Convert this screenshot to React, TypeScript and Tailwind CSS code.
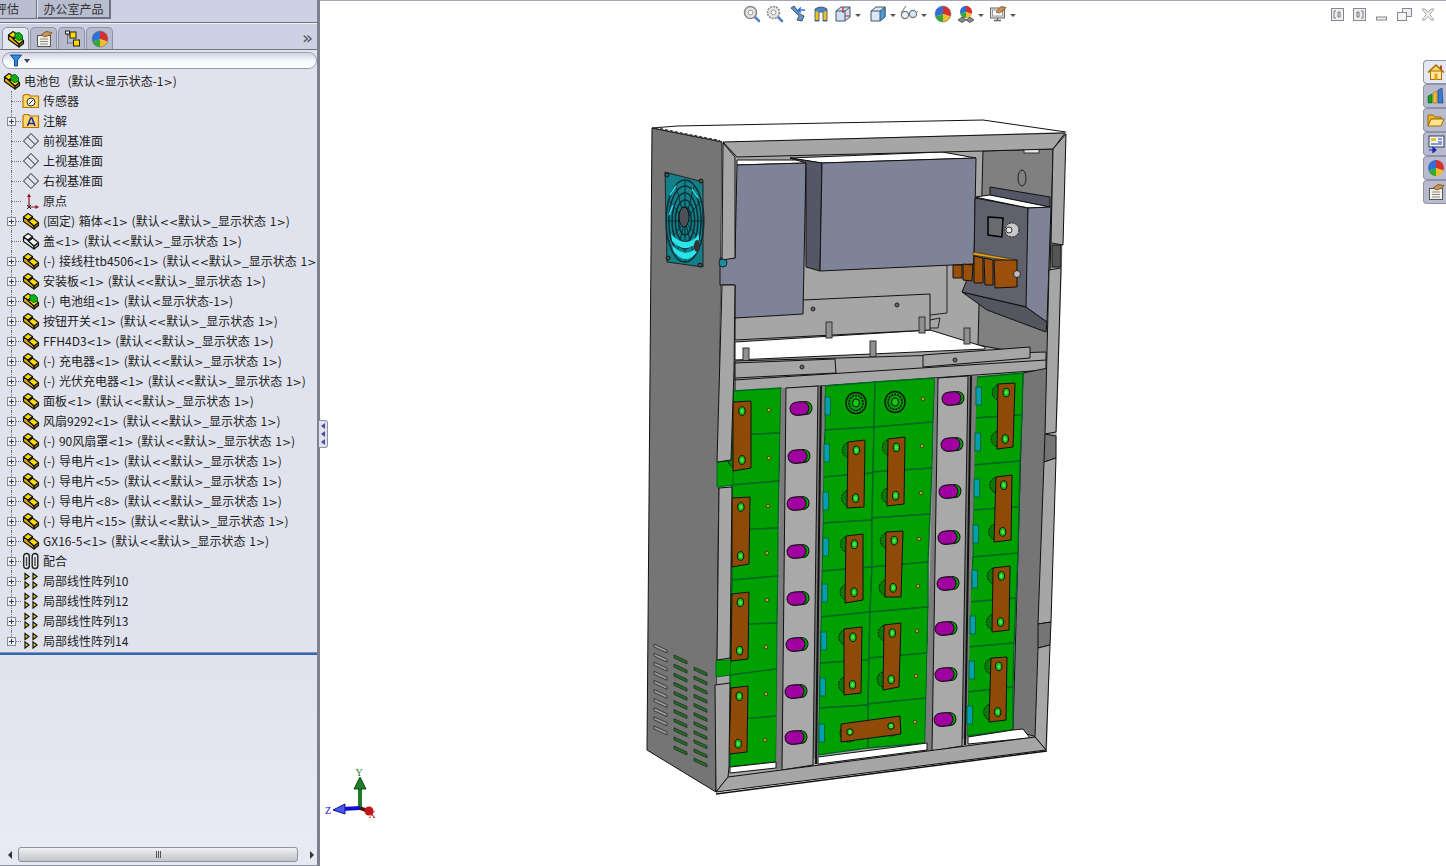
import type { ReactNode } from 'react';

type Pt = [number, number];

const poly = (p: Pt[]) => p.map((q) => q.join(',')).join(' ');

function PartIcon({ green, white }: { green?: boolean; white?: boolean }) {
  const top = white ? '#f4f5f8' : '#ffdc00';
  const front = white ? '#dcdde2' : '#dca600';
  const side = white ? '#b4b5ba' : '#a87a00';
  return (
    <svg width="18" height="18" viewBox="0 0 18 18" className="shrink-0">
      <g stroke="#151515" strokeWidth="1.15" strokeLinejoin="round">
        <path d="M1.5 5 L6 8 L6.5 9 L12 14 L12 17 L1.5 9.5 Z" fill={front} />
        <path d="M12 14 L16.5 10.5 L16.5 13.5 L12 17 Z" fill={side} />
        <path d="M6.5 9 L10.5 6 L16.5 10.5 L12 14 Z" fill={top} />
        <path d="M6 8 L10.5 4.5 L10.5 6 L6.5 9 Z" fill={side} />
        <path d="M1.5 5 L6 1.5 L10.5 4.5 L6 8 Z" fill={top} />
      </g>
      {green && <path d="M8 3.5 L12.5 2.5 L15.5 5.5 L15.5 9.5 L11 10.5 L8 7.5 Z" fill="#10b010" stroke="#063" strokeWidth="1" />}
    </svg>
  );
}

function PlaneIcon() {
  return (
    <svg width="18" height="18" viewBox="0 0 18 18" className="shrink-0">
      <path d="M9 1.5 L16.5 9 L9 16.5 L1.5 9 Z" fill="none" stroke="#222" strokeWidth="1" />
      <path d="M5.5 5 L13 12.5" stroke="#222" strokeWidth="1" />
    </svg>
  );
}

function FolderBase({ children }: { children: ReactNode }) {
  return (
    <svg width="18" height="16" viewBox="0 0 18 16" className="shrink-0">
      <path d="M1 3 L1 14.5 L16.5 14.5 L16.5 3 L8 3 L6.5 1.5 L2.5 1.5 Z" fill="#ffd964" stroke="#b87400" strokeWidth="1.2" />
      {children}
    </svg>
  );
}

function SensorIcon() {
  return (
    <FolderBase>
      <circle cx="9" cy="9" r="4" fill="#f2f2f2" stroke="#333" />
      <path d="M7 11 L11 7" stroke="#333" />
    </FolderBase>
  );
}

function NoteIcon() {
  return (
    <FolderBase>
      <path d="M5.5 13 L8.7 5 L10 5 L13 13 M7 10.5 L11.5 10.5" fill="none" stroke="#1a2aa8" strokeWidth="1.6" />
    </FolderBase>
  );
}

function OriginIcon() {
  return (
    <svg width="18" height="18" viewBox="0 0 18 18" className="shrink-0">
      <path d="M7 15 L7 4 M7 15 L15 15" stroke="#8c1414" strokeWidth="1.2" />
      <path d="M7 1.5 L5 5 L9 5 Z M17 15 L13.5 13 L13.5 17 Z" fill="#8c1414" />
      <path d="M5 13 L9 17 M9 13 L5 17" stroke="#222" />
    </svg>
  );
}

function MateIcon() {
  return (
    <svg width="18" height="18" viewBox="0 0 18 18" className="shrink-0">
      {[4.5, 13].map((x) => (
        <g key={x}>
          <rect x={x - 2.8} y="1.5" width="5.6" height="15" rx="2.8" fill="#e8eaf0" stroke="#222" strokeWidth="1.4" />
          <path d={`M${x} 5 L${x} 14`} stroke="#444" strokeWidth="1.4" />
        </g>
      ))}
    </svg>
  );
}

function PatternIcon() {
  return (
    <svg width="18" height="18" viewBox="0 0 18 18" className="shrink-0">
      {[
        [3, 1.5],
        [11, 1.5],
        [3, 10],
        [11, 10],
      ].map(([x, y]) => (
        <g key={`${x}-${y}`}>
          <path d={`M${x} ${y} L${x} ${y + 6} L${x + 4} ${y + 3} Z`} fill="#ffd800" stroke="#111" strokeWidth="1.2" />
        </g>
      ))}
    </svg>
  );
}

function Ball({ size = 18 }: { size?: number }) {
  return (
    <svg width={size} height={size} viewBox="0 0 18 18" className="shrink-0">
      <path d="M9 9 L9 1 A8 8 0 0 0 1.5 11.5 Z" fill="#2f6fd8" />
      <path d="M9 9 L9 1 A8 8 0 0 1 16.5 11.5 Z" fill="#d83030" />
      <path d="M9 9 L1.5 11.5 A8 8 0 0 0 9 17 Z" fill="#35a835" />
      <path d="M9 9 L16.5 11.5 A8 8 0 0 1 9 17 Z" fill="#e8c030" />
      <circle cx="9" cy="9" r="8" fill="none" stroke="#777" strokeWidth="0.6" />
    </svg>
  );
}

function PropIcon() {
  return (
    <svg width="18" height="18" viewBox="0 0 18 18">
      <rect x="2.5" y="5.5" width="13" height="11" fill="#f3f1e8" stroke="#555" />
      <path d="M5 9 L13 9 M5 11.5 L13 11.5 M5 14 L13 14" stroke="#888" />
      <path d="M6 5 L11 1.5 L17 2.5 L15 5 L10 7 Z" fill="#c9935a" stroke="#7a4e20" strokeWidth="0.8" />
    </svg>
  );
}

function ConfigIcon() {
  return (
    <svg width="18" height="18" viewBox="0 0 18 18">
      <path d="M4.5 1.5 L4.5 14 M4.5 5 L8 5 M4.5 13 L10 13" stroke="#333" strokeDasharray="1 1" />
      <rect x="7" y="2" width="6" height="6" fill="#ffd800" stroke="#222" />
      <rect x="10.5" y="10" width="6" height="6" fill="#ffd800" stroke="#222" />
      <rect x="2.5" y="1" width="4" height="3" fill="#f3f3f3" stroke="#222" />
    </svg>
  );
}

function Caret() {
  return <span className="ml-[3px] mt-[2px] w-0 h-0 border-x-[3px] border-x-transparent border-t-[3px] border-t-[#555]" />;
}

function ToolIcon({ children, w = 18, caret }: { children: ReactNode; w?: number; caret?: boolean }) {
  return (
    <div className="flex items-center shrink-0">
      <svg width={w} height="18" viewBox={`0 0 ${w} 18`}>
        {children}
      </svg>
      {caret && <Caret />}
    </div>
  );
}

function Zoom({ dashed }: { dashed?: boolean }) {
  return (
    <>
      <path d="M11 11 L16 16" stroke="#4d86c8" strokeWidth="2.6" strokeLinecap="round" />
      <circle cx="7.5" cy="7.5" r="6" fill="#e6e6e6" stroke="#8a8a8a" strokeWidth="1.6" strokeDasharray={dashed ? '2 1' : undefined} />
      <circle cx="7.5" cy="7.5" r="2.4" fill="#fff" stroke="#999" />
    </>
  );
}

function ViewToolbar() {
  return (
    <div className="flex items-center h-[26px] ml-[423px] text-[0px]">
      <ToolIcon>
        <Zoom />
      </ToolIcon>
      <div className="ml-[5px]">
        <ToolIcon>
          <Zoom dashed />
        </ToolIcon>
      </div>
      <div className="ml-[5px]">
        <ToolIcon>
          <path d="M2 3 L10 11 L8 15 L13 16 L15 11 L11 9 L5 1 Z" fill="#5a9ad8" stroke="#333" strokeWidth="0.8" />
          <path d="M9 5 L16 5 M9 5 L12 2.5 M9 5 L12 7.5" stroke="#2f6fd8" strokeWidth="1.4" fill="none" />
        </ToolIcon>
      </div>
      <div className="ml-[5px]">
        <ToolIcon>
          <path d="M3 4 Q9 0 15 4 L15 16 L11 16 L11 7 L7 7 L7 16 L3 16 Z" fill="#4d86c8" stroke="#345" strokeWidth="0.8" />
          <path d="M3.5 6 L6.5 7 L6.5 15 L3.5 15 Z M11.5 7 L14.5 6 L14.5 15 L11.5 15 Z" fill="#f0c020" />
        </ToolIcon>
      </div>
      <div className="ml-[4px]">
        <ToolIcon caret>
          <path d="M2 6 L7 2 L16 2 L16 12 L11 16 L2 16 Z" fill="#cfe0f4" stroke="#456" />
          <path d="M2 6 L11 6 L11 16 M11 6 L16 2" fill="none" stroke="#456" />
          <path d="M9 2 L9 8 M11 11 L16 11" stroke="#d02020" strokeWidth="1.2" />
        </ToolIcon>
      </div>
      <div className="ml-[8px]">
        <ToolIcon caret>
          <path d="M2 6 L7 2 L16 2 L16 12 L11 16 L2 16 Z" fill="#d8e8f8" stroke="#456" />
          <path d="M11 6 L16 2 L16 12 L11 16 Z" fill="#4d9ad8" stroke="#456" />
          <path d="M2 6 L11 6" stroke="#456" />
        </ToolIcon>
      </div>
      <div className="ml-[4px]">
        <ToolIcon caret>
          <path d="M6 1 L1 8" stroke="#888" strokeWidth="1.2" />
          <circle cx="5" cy="10" r="3.6" fill="#eee" stroke="#777" strokeWidth="1.2" />
          <circle cx="13" cy="9" r="3.6" fill="#d5e6f6" stroke="#777" strokeWidth="1.2" />
          <path d="M8.5 9 L9.5 9 M16 8 L18 6" stroke="#777" />
        </ToolIcon>
      </div>
      <div className="ml-[7px]">
        <Ball />
      </div>
      <div className="ml-[5px]">
        <ToolIcon caret>
          <g transform="translate(2 0) scale(0.78)">
            <path d="M9 9 L9 1 A8 8 0 0 0 1.5 11.5 Z" fill="#2f6fd8" />
            <path d="M9 9 L9 1 A8 8 0 0 1 16.5 11.5 Z" fill="#d83030" />
            <path d="M9 9 L1.5 11.5 A8 8 0 0 0 9 17 Z" fill="#35a835" />
            <path d="M9 9 L16.5 11.5 A8 8 0 0 1 9 17 Z" fill="#e8c030" />
          </g>
          <path d="M1 15 L5 12 L9 15 L13 12 L17 15 L13 17.5 L9 15 L5 17.5 Z" fill="#888" stroke="#333" strokeWidth="0.7" />
        </ToolIcon>
      </div>
      <div className="ml-[5px]">
        <ToolIcon caret>
          <rect x="1.5" y="3" width="14" height="10" fill="#e4e4e4" stroke="#666" />
          <rect x="3.5" y="5" width="10" height="6" fill="#fff" stroke="#999" />
          <path d="M5 15.5 L12 15.5 M8.5 13 L8.5 15.5" stroke="#666" strokeWidth="1.4" />
          <path d="M7 7 L12 1.5 L17 2.5 L14 6 L10 8 Z" fill="#c9935a" stroke="#7a4e20" strokeWidth="0.8" />
        </ToolIcon>
      </div>
    </div>
  );
}

function WindowControls() {
  return (
    <div className="ml-auto flex items-center h-[26px] pr-[11px] gap-[9px]">
      <svg width="13" height="13" viewBox="0 0 13 13" className="shrink-0">
        <rect x="0.5" y="0.5" width="12" height="12" fill="#eceef3" stroke="#888" />
        <path d="M5 3 L3 3 L3 10 L5 10 M7 4 L9 4 L9 9 L7 9 Z" fill="none" stroke="#777" />
      </svg>
      <svg width="13" height="13" viewBox="0 0 13 13" className="shrink-0">
        <rect x="0.5" y="0.5" width="12" height="12" fill="#eceef3" stroke="#888" />
        <path d="M4 4 L6 4 L6 9 L4 9 Z M8 3 L10 3 L10 10 L8 10" fill="none" stroke="#777" />
      </svg>
      <svg width="13" height="13" viewBox="0 0 13 13" className="shrink-0">
        <rect x="1.5" y="9" width="10" height="3" fill="#eceef3" stroke="#888" />
      </svg>
      <svg width="15" height="13" viewBox="0 0 15 13" className="shrink-0">
        <rect x="5.5" y="0.5" width="9" height="8" fill="#eceef3" stroke="#888" />
        <rect x="0.5" y="4.5" width="9" height="8" fill="#f4f5f8" stroke="#888" />
      </svg>
      <svg width="14" height="13" viewBox="0 0 14 13" className="shrink-0">
        <path d="M1 1 L4 1 L7 4.5 L10 1 L13 1 L8.7 6.5 L13 12 L10 12 L7 8.5 L4 12 L1 12 L5.3 6.5 Z" fill="#f1f2f5" stroke="#a8a8a8" />
      </svg>
    </div>
  );
}

const TASK_ICONS: ReactNode[] = [
  <>
    <path d="M1 9.5 L9 2 L17 9.5" fill="#ffd964" stroke="#a87000" strokeWidth="1.6" />
    <rect x="3.5" y="8" width="11" height="8.5" fill="#ffe9a0" stroke="#a87000" />
    <rect x="7.5" y="10.5" width="3" height="6" fill="#e8a020" />
    <rect x="13" y="2.5" width="2" height="4" fill="#b84a20" />
  </>,
  <>
    <path d="M1 9 L5 7 L5 16 L1 16 Z" fill="#18a018" stroke="#063" strokeWidth="0.6" />
    <path d="M6 6 L10 4 L10 16 L6 16 Z" fill="#f0c020" stroke="#863" strokeWidth="0.6" />
    <path d="M11 3 L15 1 L16 16 L11 16 Z" fill="#3a7ad8" stroke="#235" strokeWidth="0.6" />
  </>,
  <>
    <path d="M1 4 L6 4 L8 6 L14 6 L14 8 L4 8 L1 15 Z" fill="#f0b830" stroke="#a06a00" />
    <path d="M4 8 L17 8 L14 15 L1 15 Z" fill="#ffe590" stroke="#a06a00" />
  </>,
  <>
    <rect x="2" y="1" width="15" height="11" fill="#eef2fa" stroke="#345" />
    <rect x="4" y="3" width="5" height="3" fill="#f0c020" />
    <path d="M11 4 L15 4 M11 7 L15 7 M4 9 L15 9" stroke="#2a3aa8" />
    <path d="M2 15 L9 15 M9 15 L6 12.5 L6 17.5 Z" fill="#1a2ab8" stroke="#1a2ab8" strokeWidth="1.2" />
  </>,
  <>
    <path d="M9 9 L9 1 A8 8 0 0 0 1.5 11.5 Z" fill="#2f6fd8" />
    <path d="M9 9 L9 1 A8 8 0 0 1 16.5 11.5 Z" fill="#d83030" />
    <path d="M9 9 L1.5 11.5 A8 8 0 0 0 9 17 Z" fill="#35a835" />
    <path d="M9 9 L16.5 11.5 A8 8 0 0 1 9 17 Z" fill="#e8c030" />
  </>,
  <>
    <rect x="2.5" y="5.5" width="13" height="11" fill="#f3f1e8" stroke="#555" />
    <path d="M5 9 L13 9 M5 11.5 L13 11.5 M5 14 L13 14" stroke="#888" />
    <path d="M6 5 L11 1.5 L17 2.5 L15 5 L10 7 Z" fill="#c9935a" stroke="#7a4e20" strokeWidth="0.8" />
  </>,
];

function TaskPane() {
  return (
    <div className="absolute right-0 top-[60px] flex flex-col">
      {TASK_ICONS.map((icon, i) => (
        <div
          key={i}
          className={`w-[23px] h-[24px] flex items-center justify-end pr-[1px] rounded-l-[4px] border border-r-0 border-[#8f93a6] ${
            i === 0 ? 'bg-[#e6e8f1]' : 'bg-[#b7bbcd]'
          }`}
        >
          <svg width="18" height="18" viewBox="0 0 18 18">
            {icon}
          </svg>
        </div>
      ))}
    </div>
  );
}

// Front-plane geometry of the cabinet, traced from the reference
const CELLS: [number, number, number, number][][] = [
  [
    [733, 391, 781, 388],
    [733, 435, 780, 433],
    [732, 485, 779, 481],
    [732, 530, 778, 528],
    [732, 580, 778, 576],
    [731, 625, 777, 623],
    [730, 675, 777, 669],
    [730, 720, 777, 716],
    [730, 767, 776, 762],
  ],
  [
    [825, 386, 875, 382],
    [825, 430, 874, 427],
    [823, 477, 873, 473],
    [823, 523, 872, 520],
    [822, 571, 872, 567],
    [821, 617, 870, 612],
    [820, 663, 869, 660],
    [819, 708, 868, 705],
    [818, 755, 868, 748],
  ],
  [
    [875, 382, 935, 378],
    [874, 427, 933, 422],
    [873, 472, 932, 468],
    [872, 518, 930, 514],
    [872, 567, 928, 562],
    [870, 612, 928, 607],
    [869, 658, 927, 653],
    [868, 704, 926, 698],
    [868, 748, 925, 743],
  ],
  [
    [977, 377, 1023, 373],
    [975, 418, 1022, 415],
    [974, 465, 1020, 461],
    [973, 510, 1019, 507],
    [973, 557, 1018, 553],
    [970, 602, 1016, 598],
    [968, 647, 1014, 643],
    [968, 692, 1013, 687],
    [967, 736, 1013, 730],
  ],
];

const BARS: Pt[][] = [
  [[733, 402], [751, 401], [751, 468], [733, 471]],
  [[732, 498], [750, 497], [749, 564], [732, 567]],
  [[732, 594], [749, 592], [748, 659], [731, 661]],
  [[731, 688], [748, 686], [747, 752], [729, 754]],
  [[848, 442], [865, 440], [864, 507], [847, 508]],
  [[846, 536], [863, 534], [863, 600], [845, 603]],
  [[844, 629], [862, 627], [861, 693], [844, 695]],
  [[888, 439], [905, 437], [904, 504], [887, 506]],
  [[886, 532], [903, 531], [901, 597], [885, 597]],
  [[884, 625], [901, 623], [899, 687], [883, 690]],
  [[998, 384], [1015, 383], [1013, 447], [997, 449]],
  [[996, 477], [1012, 475], [1011, 540], [994, 542]],
  [[993, 568], [1010, 566], [1009, 630], [992, 632]],
  [[991, 658], [1007, 657], [1006, 720], [989, 722]],
];

const SLOTS: Pt[] = [
  [800, 408], [798, 456], [797, 503], [797, 551], [797, 598], [796, 644], [795, 691], [795, 737],
  [952, 398], [951, 444], [949, 491], [948, 537], [947, 583], [945, 628], [945, 674], [944, 719],
];

const TABS: Pt[] = [
  [825, 397], [824, 444], [823, 492], [823, 538], [822, 584], [821, 632], [820, 678], [819, 724],
  [976, 387], [975, 433], [974, 479], [973, 525], [972, 570], [970, 616], [969, 661], [967, 706],
];

const DOTS: Pt[] = [
  [769, 410], [769, 458], [768, 506], [767, 553], [767, 600], [766, 647], [766, 694], [765, 740],
  [923, 399], [922, 446], [921, 493], [919, 539], [918, 586], [917, 631], [916, 676], [915, 722],
];

const VENTS: { x: number; y: number; n: number; fill: string }[] = [
  { x: 654, y: 644, n: 10, fill: '#9a9a9a' },
  { x: 674, y: 655, n: 11, fill: '#1f6f1f' },
  { x: 694, y: 667, n: 11, fill: '#1f6f1f' },
];

const GRAY = '#a6a6a6';
const STEEL = '#7f8397';
const INK = { stroke: '#111', strokeWidth: 1, strokeLinejoin: 'round' as const };

function Bolt({ x, y, r = 6 }: { x: number; y: number; r?: number }) {
  return (
    <>
      <ellipse cx={x} cy={y} rx={3.2} ry={r * 0.72} fill="#16c016" stroke="#111" />
      <ellipse cx={x} cy={y} rx={1.4} ry={2} fill="#50e850" />
    </>
  );
}

function CabinetModel() {
  return (
    <svg viewBox="320 0 1126 866" className="absolute inset-0 w-full h-full">
      {/* top face */}
      <polygon points={poly([[652, 128], [677, 126], [983, 120], [1066, 132], [1053, 149], [737, 157], [722, 142]])} fill="#fff" {...INK} />
      {/* left side */}
      <polygon points={poly([[652, 128], [722, 142], [716, 792], [647, 750]])} fill="#757575" {...INK} />
      <polyline points="655,128 720,141" fill="none" stroke="#333" strokeWidth="2" strokeDasharray="3 2" />

      {/* fan */}
      <polygon points={poly([[665, 172], [703, 182], [703, 267], [667, 262]])} fill="#137f88" stroke="#222" />
      {[14, 21, 28, 35, 41].map((r) => (
        <ellipse key={r} cx={685} cy={221} rx={r * 0.46} ry={r} fill="none" stroke="#0b2f36" strokeWidth="1.5" />
      ))}
      {[0, 30, 60, 90, 120, 150].map((a) => {
        const dx = Math.cos((a * Math.PI) / 180);
        const dy = Math.sin((a * Math.PI) / 180);
        return <line key={a} x1={685 - 18 * dx} y1={221 - 40 * dy} x2={685 + 18 * dx} y2={221 + 40 * dy} stroke="#0b2f36" strokeWidth="1" />;
      })}
      <path d="M671 234 Q686 250 699 234 L699 240 Q686 256 672 241 Z" fill="#2ae4e8" />
      <path d="M672 245 Q686 260 698 246 L697 252 Q686 266 674 252 Z" fill="#2ae4e8" />
      <path d="M670 195 L676 186 M698 198 L692 189 M669 215 L673 205" stroke="#27dce0" strokeWidth="1.4" />
      <ellipse cx={684} cy={217} rx={5} ry={10} fill="#4a5258" stroke="#111" />
      <ellipse cx={697} cy={246} rx={3} ry={6} fill="#333" />
      {[[667, 175], [701, 181], [668, 258], [700, 265]].map(([x, y]) => (
        <circle key={`${x}-${y}`} cx={x} cy={y} r="2" fill="#555" stroke="#111" />
      ))}

      {/* vents */}
      {VENTS.map((v) =>
        Array.from({ length: v.n }, (_, i) => (
          <polygon
            key={`${v.x}-${i}`}
            points={poly([
              [v.x, v.y + i * 9.1],
              [v.x + 13, v.y + i * 9.1 + 6],
              [v.x + 13, v.y + i * 9.1 + 9],
              [v.x, v.y + i * 9.1 + 3],
            ])}
            fill={v.fill}
            stroke="#2a2a2a"
            strokeWidth="0.8"
          />
        ))
      )}

      {/* interior */}
      <polygon points={poly([[722, 142], [1066, 132], [1047, 750], [716, 792]])} fill={GRAY} stroke="none" />
      <polygon points={poly([[983, 151], [1053, 149], [1048, 358], [978, 345]])} fill="#808080" {...INK} />
      <ellipse cx={1022} cy={178} rx={4} ry={8} fill="none" stroke="#222" />
      <rect x={1024} y={149} width={15} height={4} fill="#e8e8e8" stroke="#333" />

      {/* white opening and plate */}
      <polygon points={poly([[735, 342], [930, 330], [985, 347], [985, 349], [735, 360]])} fill="#fff" {...INK} />
      <polygon points={poly([[803, 300], [930, 294], [930, 330], [735, 340], [735, 318]])} fill={GRAY} {...INK} />
      <polyline points="947,265 947,313 930,315" fill="none" stroke="#222" />
      <path d="M930 320 L940 318 L938 328 L930 328" fill="none" stroke="#222" />
      <circle cx={813} cy={309} r="2" fill="#666" stroke="#222" />
      <circle cx={897} cy={305} r="2" fill="#666" stroke="#222" />
      {[[829, 322], [922, 317], [967, 328], [873, 341], [746, 348]].map(([x, y]) => (
        <rect key={x} x={x - 3} y={y} width={6} height={16} fill="#8f8f8f" stroke="#333" />
      ))}

      {/* power boxes */}
      <polygon points={poly([[737, 160], [800, 160], [806, 163], [737, 165]])} fill="#fff" {...INK} />
      <polygon points={poly([[737, 165], [806, 163], [803, 314], [735, 318], [735, 285], [720, 285], [720, 258], [735, 258]])} fill={STEEL} {...INK} />
      <polygon points={poly([[790, 158], [942, 152], [976, 158], [822, 163]])} fill="#fff" {...INK} />
      <polygon points={poly([[790, 158], [822, 163], [820, 271], [806, 267], [806, 163]])} fill="#555766" {...INK} />
      <polygon points={poly([[822, 163], [976, 158], [974, 264], [820, 271]])} fill={STEEL} {...INK} />

      {/* right-hand module */}
      <polygon points={poly([[990, 187], [1050, 197], [1050, 207], [990, 195]])} fill="#555766" {...INK} />
      <polygon points={poly([[962, 292], [1026, 307], [1047, 322], [1046, 332], [987, 310]])} fill="#54565f" {...INK} />
      <polygon points={poly([[975, 197], [990, 195], [1050, 207], [1028, 208]])} fill="#fff" {...INK} />
      <polygon points={poly([[975, 198], [1028, 208], [1027, 307], [962, 292], [974, 262]])} fill="#5f616d" {...INK} />
      <polygon points={poly([[1028, 208], [1051, 207], [1047, 322], [1026, 307]])} fill={STEEL} {...INK} />
      <polygon points={poly([[988, 217], [1003, 218], [1002, 237], [988, 235]])} fill="#6a6a70" stroke="#000" strokeWidth="1.5" />
      <circle cx={1012} cy={230} r={7} fill="#c8c8c8" stroke="#222" strokeDasharray="2 1" />
      <circle cx={1009} cy={230} r={3} fill="#e8e8e8" stroke="#333" />
      <polygon points={poly([[973, 252], [1017, 260], [1017, 262], [973, 255]])} fill="#e8a010" stroke="#222" strokeWidth="0.6" />
      {([
        [[953, 265], [962, 265], [962, 278], [953, 278]],
        [[963, 264], [973, 265], [972, 281], [963, 280]],
        [[974, 256], [983, 258], [983, 283], [974, 283]],
        [[984, 258], [993, 260], [993, 285], [985, 285]],
        [[994, 260], [1017, 260], [1017, 287], [995, 288]],
      ] as Pt[][]).map((p) => (
        <polygon key={p[0][0]} points={poly(p)} fill="#9a4f0a" {...INK} />
      ))}
      <circle cx={1017} cy={274} r={3.5} fill="#bbb" stroke="#222" />

      {/* cross bars */}
      <polygon points={poly([[735, 361], [1046, 352], [1046, 370], [735, 392]])} fill={GRAY} {...INK} />
      <polygon points={poly([[735, 363], [835, 359], [836, 373], [735, 378]])} fill={GRAY} {...INK} />
      <polygon points={poly([[923, 355], [1030, 347], [1030, 358], [923, 367]])} fill={GRAY} {...INK} />
      <circle cx={802} cy={367} r="2" fill="#666" stroke="#222" />
      <circle cx={955} cy={360} r="2" fill="#666" stroke="#222" />
      <line x1="734" y1="380" x2="1046" y2="360" stroke="#111" />

      {/* back of the battery bay */}
      <polygon points={poly([[1023, 373], [1048, 368], [1037, 737], [1013, 730]])} fill="#757575" {...INK} />

      {/* battery cells */}
      {CELLS.map((col, c) =>
        col.slice(0, -1).map((l, i) => {
          const n = col[i + 1];
          return (
            <polygon
              key={`${c}-${i}`}
              points={poly([[l[0], l[1]], [l[2], l[3]], [n[2], n[3]], [n[0], n[1]]])}
              fill="#00a000"
              stroke="#062"
              strokeWidth="1.4"
            />
          );
        })
      )}
      <polygon points={poly([[717, 462], [733, 461], [733, 485], [717, 487]])} fill="#00a000" stroke="#062" />
      <polygon points={poly([[716, 660], [731, 660], [730, 675], [716, 677]])} fill="#00a000" stroke="#062" />

      {/* strips */}
      <polygon points={poly([[781, 388], [825, 386], [818, 757], [776, 770]])} fill="#7c7c7c" stroke="none" />
      <polygon points={poly([[786, 388], [818, 386], [813, 765], [782, 770]])} fill="#a9a9a9" {...INK} />
      <line x1="821" y1="386" x2="816" y2="764" stroke="#111" strokeWidth="2" />
      <polygon points={poly([[935, 378], [977, 376], [967, 738], [925, 752]])} fill="#7c7c7c" stroke="none" />
      <polygon points={poly([[938, 378], [968, 376], [962, 746], [932, 751]])} fill="#a9a9a9" {...INK} />
      <line x1="971" y1="376" x2="965" y2="745" stroke="#111" strokeWidth="2" />

      {SLOTS.map(([x, y]) => (
        <g key={`${x}-${y}`}>
          <rect x={x - 9} y={y - 6} width={21} height={13} rx={6.5} fill="#06a006" stroke="#111" transform={`rotate(-4 ${x} ${y})`} />
          <rect x={x - 10} y={y - 6} width={19} height={13} rx={6.5} fill="#a000a0" stroke="#111" transform={`rotate(-4 ${x} ${y})`} />
        </g>
      ))}
      {TABS.map(([x, y]) => (
        <rect key={`${x}-${y}`} x={x} y={y} width={5.5} height={18} fill="#00a0b0" stroke="#063" />
      ))}
      {DOTS.map(([x, y]) => (
        <circle key={`${x}-${y}`} cx={x} cy={y} r="1.8" fill="#c0a820" stroke="#333" strokeWidth="0.8" />
      ))}

      {/* terminal washers on the top row */}
      {[[856, 403], [895, 402]].map(([x, y]) => (
        <g key={x}>
          <ellipse cx={x} cy={y} rx={10} ry={10.5} fill="#00a000" stroke="#111" strokeWidth="1.4" />
          <ellipse cx={x} cy={y} rx={7} ry={7.5} fill="none" stroke="#111" strokeDasharray="2 1" strokeWidth="1.6" />
          <ellipse cx={x} cy={y} rx={3.5} ry={4} fill="#18c818" stroke="#111" />
        </g>
      ))}

      {/* copper links */}
      {BARS.map((b) => {
        const top: Pt = [(b[0][0] + b[1][0]) / 2, (b[0][1] + b[1][1]) / 2];
        const bot: Pt = [(b[2][0] + b[3][0]) / 2, (b[2][1] + b[3][1]) / 2];
        const a: Pt = [top[0] + (bot[0] - top[0]) * 0.14, top[1] + (bot[1] - top[1]) * 0.14];
        const z: Pt = [top[0] + (bot[0] - top[0]) * 0.86, top[1] + (bot[1] - top[1]) * 0.86];
        return (
          <g key={b[0].join()}>
            <circle cx={a[0] - 6} cy={a[1]} r={8} fill="#0a7a0a" stroke="#111" strokeDasharray="2 1" />
            <circle cx={z[0] - 6} cy={z[1]} r={8} fill="#0a7a0a" stroke="#111" strokeDasharray="2 1" />
            <polygon points={poly(b)} fill="#8e4a06" {...INK} />
            <Bolt x={a[0]} y={a[1]} />
            <Bolt x={z[0]} y={z[1]} />
          </g>
        );
      })}
      <circle cx={849} cy={733} r={9} fill="#0a7a0a" stroke="#111" strokeDasharray="2 1" />
      <circle cx={891} cy={727} r={9} fill="#0a7a0a" stroke="#111" strokeDasharray="2 1" />
      <polygon points={poly([[841, 724], [900, 716], [901, 734], [841, 742]])} fill="#8e4a06" {...INK} />
      <Bolt x={850} y={732} r={4.5} />
      <Bolt x={891} y={726} r={4.5} />

      {/* white ledge at the bottom */}
      <polygon points={poly([[730, 767], [776, 762], [776, 768], [730, 773]])} fill="#fff" {...INK} />
      <polygon points={poly([[818, 757], [927, 743], [927, 750], [818, 764]])} fill="#fff" {...INK} />
      <polygon points={poly([[968, 737], [1013, 730], [1023, 729], [1030, 738], [968, 744]])} fill="#fff" {...INK} />

      {/* front frame */}
      <polygon points={poly([[723, 142], [1065, 133], [1053, 149], [983, 151], [737, 157]])} fill={GRAY} {...INK} />
      <polygon points={poly([[723, 143], [735, 157], [735, 258], [722, 260]])} fill={GRAY} {...INK} />
      <polygon points={poly([[722, 285], [735, 285], [734, 370], [731, 460], [717, 462]])} fill={GRAY} {...INK} />
      <polygon points={poly([[719, 488], [732, 487], [730, 658], [717, 660]])} fill={GRAY} {...INK} />
      <polygon points={poly([[715, 685], [730, 683], [729, 767], [728, 777], [716, 792]])} fill={GRAY} {...INK} />
      <polygon points={poly([[1066, 134], [1053, 149], [1051, 243], [1063, 245]])} fill={GRAY} {...INK} />
      <rect x={1052} y={245} width={9} height={22} fill="#555" stroke="#111" />
      <polygon points={poly([[1049, 270], [1061, 268], [1058, 370], [1056, 432], [1045, 434]])} fill={GRAY} {...INK} />
      <polygon points={poly([[1045, 434], [1056, 436], [1056, 458], [1044, 462]])} fill="#757575" {...INK} />
      <polygon points={poly([[1044, 462], [1056, 458], [1051, 622], [1038, 624]])} fill={GRAY} {...INK} />
      <polygon points={poly([[1038, 624], [1051, 622], [1050, 645], [1038, 648]])} fill="#757575" {...INK} />
      <polygon points={poly([[1038, 648], [1050, 645], [1046, 750], [1035, 737]])} fill={GRAY} {...INK} />
      <polygon points={poly([[716, 792], [1046, 750], [1035, 737], [728, 777]])} fill={GRAY} {...INK} />
      <polyline points="716,794 1047,751" fill="none" stroke="#111" strokeWidth="1.5" />
      <circle cx={723} cy={263} r="4" fill="#18909a" stroke="#123" />

      {/* triad */}
      <path d="M360 808 L360 786" stroke="#1f7a2a" strokeWidth="4" />
      <path d="M360 777 L354 789 L366 789 Z" fill="#1f7a2a" stroke="#0b4a12" />
      <path d="M360 808 L342 809" stroke="#1010c8" strokeWidth="4" />
      <path d="M333 810 L345 804 L345 814 Z" fill="#4a5ae8" stroke="#1010a0" />
      <path d="M360 808 L368 811" stroke="#5a1010" strokeWidth="4" />
      <circle cx={369} cy={811} r={4.5} fill="#c01818" />
      <text x={359} y={776} textAnchor="middle" fontSize="10" fill="#1f7a2a" fontFamily="Liberation Serif, serif">Y</text>
      <text x={328} y={814} textAnchor="middle" fontSize="10" fill="#1010e0" fontFamily="Liberation Serif, serif">Z</text>
      <text x={372} y={818} textAnchor="middle" fontSize="10" fill="#d01010" fontFamily="Liberation Serif, serif">X</text>
    </svg>
  );
}

// The tree font in the reference draws < and > much wider than the CJK font does
function Label({ text }: { text: string }) {
  return (
    <span className="[word-spacing:1px]">
      {text.split(/([<>])/).map((s, i) =>
        s === '<' || s === '>' ? (
          <span key={i} className="text-[11px] [font-family:'DejaVu_Sans',sans-serif]">
            {s}
          </span>
        ) : (
          s
        )
      )}
    </span>
  );
}

type Row = { label: string; icon: ReactNode; expand?: boolean };

const part = (label: string, green?: boolean, white?: boolean): Row => ({
  label,
  icon: <PartIcon green={green} white={white} />,
  expand: !white,
});

const ROWS: Row[] = [
  { label: '传感器', icon: <SensorIcon /> },
  { label: '注解', icon: <NoteIcon />, expand: true },
  { label: '前视基准面', icon: <PlaneIcon /> },
  { label: '上视基准面', icon: <PlaneIcon /> },
  { label: '右视基准面', icon: <PlaneIcon /> },
  { label: '原点', icon: <OriginIcon /> },
  part('(固定) 箱体<1> (默认<<默认>_显示状态 1>)'),
  part('盖<1> (默认<<默认>_显示状态 1>)', false, true),
  part('(-) 接线柱tb4506<1> (默认<<默认>_显示状态 1>'),
  part('安装板<1> (默认<<默认>_显示状态 1>)'),
  part('(-) 电池组<1> (默认<显示状态-1>)', true),
  part('按钮开关<1> (默认<<默认>_显示状态 1>)'),
  part('FFH4D3<1> (默认<<默认>_显示状态 1>)'),
  part('(-) 充电器<1> (默认<<默认>_显示状态 1>)'),
  part('(-) 光伏充电器<1> (默认<<默认>_显示状态 1>)'),
  part('面板<1> (默认<<默认>_显示状态 1>)'),
  part('风扇9292<1> (默认<<默认>_显示状态 1>)'),
  part('(-) 90风扇罩<1> (默认<<默认>_显示状态 1>)'),
  part('(-) 导电片<1> (默认<<默认>_显示状态 1>)'),
  part('(-) 导电片<5> (默认<<默认>_显示状态 1>)'),
  part('(-) 导电片<8> (默认<<默认>_显示状态 1>)'),
  part('(-) 导电片<15> (默认<<默认>_显示状态 1>)'),
  part('GX16-5<1> (默认<<默认>_显示状态 1>)'),
  { label: '配合', icon: <MateIcon />, expand: true },
  { label: '局部线性阵列10', icon: <PatternIcon />, expand: true },
  { label: '局部线性阵列12', icon: <PatternIcon />, expand: true },
  { label: '局部线性阵列13', icon: <PatternIcon />, expand: true },
  { label: '局部线性阵列14', icon: <PatternIcon />, expand: true },
];

function TreeRow({ row, last }: { row: Row; last: boolean }) {
  return (
    <div className="relative flex items-center h-[20px] pl-[22px] whitespace-nowrap">
      <div className={`absolute left-[11px] top-0 border-l border-dotted border-[#777] ${last ? 'h-[10px]' : 'h-[20px]'}`} />
      <div className="absolute left-[11px] top-[10px] w-[10px] border-t border-dotted border-[#777]" />
      {row.expand && (
        <div className="absolute left-[7px] top-[6px] w-[9px] h-[9px] bg-[#f2f3f7] border border-[#8a8a8a] flex items-center justify-center">
          <div className="relative w-[5px] h-[5px]">
            <div className="absolute left-0 top-[2px] w-[5px] h-[1px] bg-[#2a3a80]" />
            <div className="absolute left-[2px] top-0 w-[1px] h-[5px] bg-[#2a3a80]" />
          </div>
        </div>
      )}
      <div className="w-[18px] flex justify-center">{row.icon}</div>
      <span className="ml-[3px]">
        <Label text={row.label} />
      </span>
    </div>
  );
}

function FeatureManager() {
  return (
    <div className="w-[320px] h-[866px] shrink-0 flex flex-col bg-[#e0e3ed] border-r-[3px] border-[#7d8190] overflow-hidden text-[12px] leading-none text-[#1c1c1c] [font-family:'Noto_Sans_CJK_SC','Liberation_Sans',sans-serif]">
      {/* document tabs */}
      <div className="h-[23px] shrink-0 bg-[#ccd1e3] border-b border-[#70747f]">
        <div className="flex h-[19px] text-[12px] text-[#333]">
          <div className="w-[37px] overflow-hidden flex justify-end items-center pr-[17px] bg-[#b9bdd0] border-r border-b border-[#6d707c]">
            <span className="shrink-0">评估</span>
          </div>
          <div className="w-[74px] flex items-center justify-center bg-[#b9bdd0] border-r-2 border-b-2 border-[#6d707c] border-l border-l-[#e8eaf2]">
            办公室产品
          </div>
        </div>
      </div>
      {/* panel tabs */}
      <div className="h-[27px] shrink-0 flex items-end gap-[1px] pl-[2px] pr-[4px] bg-[#ccd1e3] border-t border-[#f0f1f6] border-b border-b-[#70747f]">
        {[<PartIcon key="a" green />, <PropIcon key="b" />, <ConfigIcon key="c" />, <Ball key="d" />].map((icon, i) => (
          <div
            key={i}
            className={`w-[27px] h-[22px] flex items-center justify-center rounded-t-[5px] border border-b-0 border-[#8f93a6] ${
              i === 0 ? 'bg-[#e6e8f1]' : 'bg-[#b7bbcd]'
            }`}
          >
            {icon}
          </div>
        ))}
        <span className="ml-auto mb-[2px] text-[18px] leading-none text-[#555] [font-family:'DejaVu_Sans',sans-serif]">»</span>
      </div>
      {/* filter */}
      <div className="h-[21px] shrink-0 pl-[2px] pt-[2px] bg-[#e0e3ed]">
        <div className="h-[17px] flex items-center pl-[7px] rounded-full border border-[#9a9dac] bg-gradient-to-b from-[#cfd3e2] via-[#f5f6fa] to-white">
          <svg width="12" height="13" viewBox="0 0 12 13">
            <path d="M0.5 1 L11.5 1 L7.5 6 L7.5 12 L4.5 12 L4.5 6 Z" fill="#2f8ae0" stroke="#124a90" />
          </svg>
          <div className="ml-[2px] w-0 h-0 border-x-[3px] border-x-transparent border-t-[4px] border-t-[#3a4468]" />
        </div>
      </div>
      {/* tree */}
      <div className="shrink-0 h-[581px] flex flex-col">
        <div className="flex items-center h-[20px] pl-[3px] whitespace-nowrap">
          <PartIcon green />
          <span className="ml-[3px]">
            <Label text={'电池包\u00a0\u00a0(默认<显示状态-1>)'} />
          </span>
        </div>
        {ROWS.map((r, i) => (
          <TreeRow key={r.label} row={r} last={i === ROWS.length - 1} />
        ))}
      </div>
      <div className="h-[3px] shrink-0 bg-[#2f68b0] border-t border-[#8a95b0]" />
      <div className="flex-1 bg-gradient-to-b from-[#e0e3ed] to-[#e8ebf3]" />
      {/* scrollbar */}
      <div className="h-[19px] shrink-0 flex items-center pb-[3px] pr-[2px] bg-[#e6e9f2] border-b border-[#8a8e9c]">
        <div className="w-[18px] flex justify-center pl-[2px]">
          <div className="w-0 h-0 border-y-[4px] border-y-transparent border-r-[4px] border-r-[#333]" />
        </div>
        <div className="w-[280px] h-[15px] flex items-center justify-center rounded-[3px] border border-[#8e919c] bg-gradient-to-b from-[#f2f2f4] via-[#d8d9dd] to-[#c4c6cb]">
          <div className="flex gap-[1px]">
            <div className="w-[1px] h-[7px] bg-[#555]" />
            <div className="w-[1px] h-[7px] bg-[#555]" />
            <div className="w-[1px] h-[7px] bg-[#555]" />
          </div>
        </div>
        <div className="flex-1 flex justify-center pl-[10px]">
          <div className="w-0 h-0 border-y-[4px] border-y-transparent border-l-[4px] border-l-[#333]" />
        </div>
      </div>
    </div>
  );
}

export default function App() {
  return (
    <div className="relative flex w-[1446px] h-[866px] overflow-hidden bg-white">
      <FeatureManager />
      {/* splitter handle */}
      <div className="absolute left-[319px] top-[420px] w-[9px] h-[28px] flex flex-col items-center justify-center gap-[2px] rounded-r-[3px] bg-[#e0e3ed] border border-l-0 border-[#8f93a6]">
        {[0, 1, 2].map((i) => (
          <div key={i} className="w-0 h-0 border-y-[3px] border-y-transparent border-r-[4px] border-r-[#4a4e9a]" />
        ))}
      </div>
      <div className="relative flex-1 h-full">
        <CabinetModel />
        <div className="relative flex border-t border-[#a4a8b4]">
          <ViewToolbar />
          <WindowControls />
        </div>
        <TaskPane />
      </div>
    </div>
  );
}
